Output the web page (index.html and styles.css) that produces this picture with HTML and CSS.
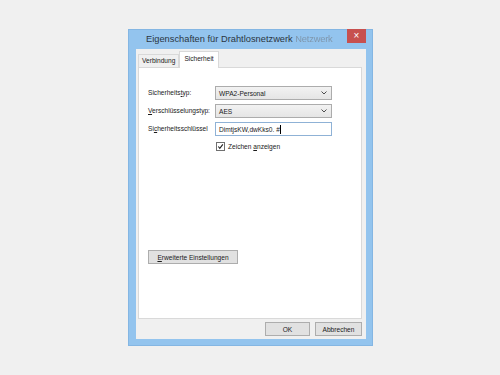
FILE: index.html
```html
<!DOCTYPE html>
<html lang="de">
<head>
<meta charset="utf-8">
<title>Eigenschaften für Drahtlosnetzwerk</title>
<link rel="stylesheet" href="styles.css">
</head>
<body>
<div class="desk">
  <div class="window">
    <div class="titlebar">
      <span class="title">Eigenschaften für Drahtlosnetzwerk <span class="blurred">Netzwerk</span></span>
      <span class="close">×</span>
    </div>
    <div class="client">
      <div class="tabs">
        <div class="tab">Verbindung</div>
        <div class="tab active">Sicherheit</div>
      </div>
      <div class="panel">
        <div class="form">
          <label class="lbl">Sicherheits<u>t</u>yp:</label>
          <div class="select"><span>WPA2-Personal</span><svg class="chev" viewBox="0 0 6 4" width="6" height="4"><path d="M0.5 0.5 L3 3 L5.5 0.5" fill="none" stroke="#4d4d4d" stroke-width="1"/></svg></div>
          <label class="lbl"><u>V</u>erschlüsselungstyp:</label>
          <div class="select"><span>AES</span><svg class="chev" viewBox="0 0 6 4" width="6" height="4"><path d="M0.5 0.5 L3 3 L5.5 0.5" fill="none" stroke="#4d4d4d" stroke-width="1"/></svg></div>
          <label class="lbl">Si<u>c</u>herheitsschlüssel</label>
          <div class="input">DimtjsKW,dwKks0. #<span class="caret"></span></div>
          <div></div>
          <div class="check">
            <span class="box"><svg viewBox="0 0 8 8" width="8" height="8"><path d="M1.5 4 L3.2 6 L6.7 1.5" fill="none" stroke="#222" stroke-width="1.3"/></svg></span>
            <span>Zeichen <u>a</u>nzeigen</span>
          </div>
        </div>
        <div class="adv"><span class="btn wide"><u>E</u>rweiterte Einstellungen</span></div>
      </div>
      <div class="footer">
        <span class="btn ok">OK</span>
        <span class="btn cancel">Abbrechen</span>
      </div>
    </div>
  </div>
</div>
</body>
</html>
```
FILE: styles.css
```css
html, body {
  margin: 0;
  padding: 0;
  background: #f0f0f0;
}
.desk {
  padding: 29px 0 0 128px;
  font-family: "Liberation Sans", Arial, sans-serif;
}
.window {
  box-sizing: border-box;
  width: 245px;
  height: 317px;
  background: #93c4ee;
  border: 1px solid #84b6e3;
  display: flex;
  flex-direction: column;
  padding: 0 6px 6px 7px;
}
.titlebar {
  height: 19px;
  display: flex;
  align-items: flex-start;
  flex: none;
}
.title {
  font-size: 9.3px;
  color: #2b3642;
  line-height: 18px;
  margin-left: 10px;
  white-space: nowrap;
}
.blurred {
  color: #7f97ad;
  filter: blur(0.45px);
  letter-spacing: -0.2px;
}
.close {
  margin-left: auto;
  width: 19px;
  height: 14px;
  margin-top: -1px;
  background: #c7504f;
  color: #fff;
  font-size: 10px;
  line-height: 14px;
  text-align: center;
}
.client {
  flex: 1;
  background: #f0f0f0;
  display: flex;
  flex-direction: column;
  padding: 2px 4px 0 2px;
  font-size: 6.6px;
  color: #1a1a1a;
}
.tabs {
  display: flex;
  align-items: flex-end;
  height: 16px;
  position: relative;
  z-index: 1;
}
.tab {
  height: 12px;
  line-height: 12px;
  padding: 0 3px;
  border: 1px solid #d9d9d9;
  border-bottom: none;
  background: #f0f0f0;
}
.tab.active {
  height: 16px;
  line-height: 13px;
  background: #fff;
  padding: 0 4px;
  margin-bottom: -1px;
}
.panel {
  height: 252px;
  box-sizing: border-box;
  background: #fff;
  border: 1px solid #d9d9d9;
  padding: 18px 0 0 9px;
  display: flex;
  flex-direction: column;
}
.form {
  display: grid;
  grid-template-columns: 67px 117px;
  row-gap: 4px;
  align-items: center;
}
.lbl {
  line-height: 14px;
}
.select {
  box-sizing: border-box;
  height: 14px;
  border: 1px solid #acacac;
  background: linear-gradient(#f2f2f2, #e5e5e5);
  display: flex;
  align-items: center;
  padding: 0 4px 0 3px;
}
.chev {
  margin-left: auto;
}
.input {
  box-sizing: border-box;
  height: 14px;
  border: 1px solid #8fb2d6;
  background: #fff;
  display: flex;
  align-items: center;
  padding: 0 3px;
}
.caret {
  width: 1px;
  height: 9px;
  background: #000;
  margin-left: 0.5px;
}
.check {
  display: flex;
  align-items: center;
  gap: 3px;
  margin-top: 2px;
  padding-left: 1px;
}
.box {
  box-sizing: border-box;
  width: 9px;
  height: 9px;
  border: 1px solid #707070;
  background: #fff;
  display: flex;
  align-items: center;
  justify-content: center;
}
.box svg {
  width: 7px;
  height: 7px;
}
.adv {
  margin-top: 99px;
}
.btn {
  display: inline-flex;
  align-items: center;
  justify-content: center;
  box-sizing: border-box;
  height: 14px;
  border: 1px solid #adadad;
  background: #e1e1e1;
  padding: 0 4px;
}
.wide {
  width: 90px;
}
.footer {
  display: flex;
  justify-content: flex-end;
  gap: 5px;
  margin-top: 3px;
}
.ok {
  width: 45px;
}
.cancel {
  width: 47px;
}
```
